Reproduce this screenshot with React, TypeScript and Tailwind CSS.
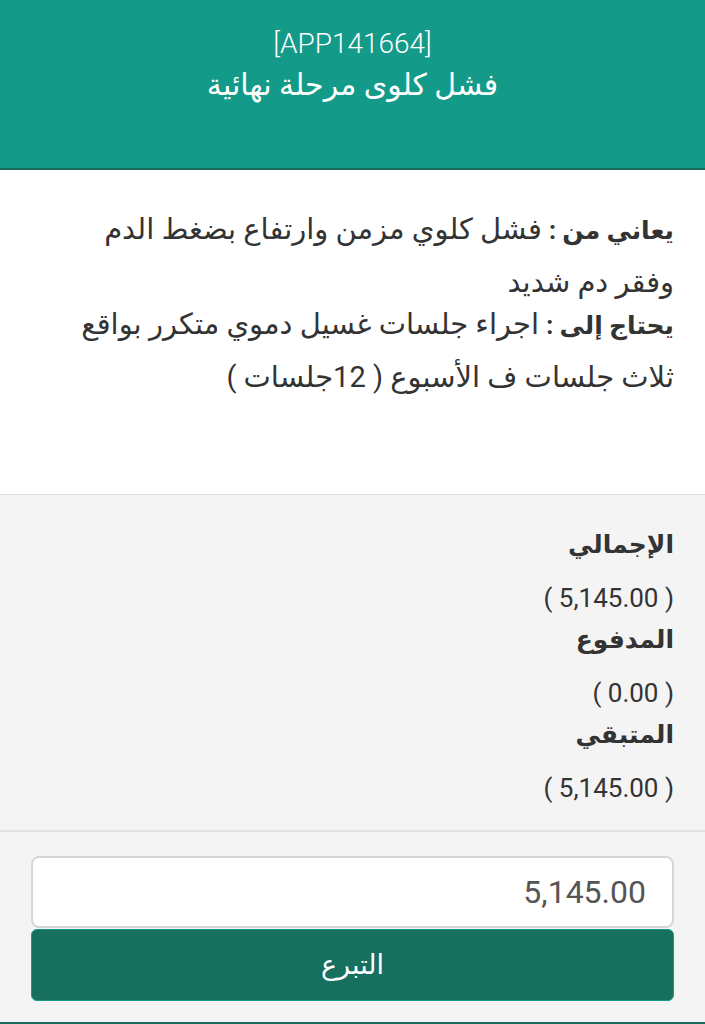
export default function App() {
  const font = { fontFamily: "Roboto, 'DejaVu Sans', sans-serif" };
  return (
    <div dir="rtl" style={font} className="w-[705px] min-h-[1024px] bg-[#f4f4f4] text-[#333]">
      <header className="h-[170px] bg-[#139a88] border-b-2 border-[#1b6b5d] text-white text-center pt-[26px]">
        <div dir="ltr" className="text-[28px] leading-[36px] font-light">[APP141664]</div>
        <div className="text-[30px] leading-[50px] mt-[-2px]">فشل كلوى مرحلة نهائية</div>
      </header>
      <section className="h-[325px] bg-white border-b border-[#dcdcdc] pr-[31px] pl-[72px] pt-[33px] text-[29px]">
        <p className="leading-[53px]">
          <b className="font-bold text-[25px] leading-[30px]">يعاني من :</b>{" "}
          <span className="leading-[30px]">فشل كلوي مزمن وارتفاع بضغط الدم وفقر دم شديد</span>
        </p>
        <p className="leading-[53px] mt-[-11px]">
          <b className="font-bold text-[25px] leading-[30px]">يحتاج إلى :</b>{" "}
          <span className="leading-[30px]">اجراء جلسات غسيل دموي متكرر بواقع ثلاث جلسات ف الأسبوع ( 12جلسات )</span>
        </p>
      </section>
      <section className="bg-[#f4f4f4] border-b-2 border-[#e2e2e2] px-[31px] pt-[29px] pb-[21px]">
        {[
          ["الإجمالي", "( 5,145.00 )"],
          ["المدفوع", "( 0.00 )"],
          ["المتبقي", "( 5,145.00 )"],
        ].map(([l, v]) => (
          <div key={l}>
            <div className="text-[25px] font-bold leading-[42px]">{l}</div>
            <div className="text-[26px] leading-[42px] mt-[11px]">{v}</div>
          </div>
        ))}
      </section>
      <section className="px-[31px] pt-[24px] pb-[21px] border-b-2 border-[#1b6b5d]">
        <div className="h-[72px] bg-white border-2 border-[#d6d6d6] rounded-[8px] flex items-center px-[26px] text-[32px] text-[#555]">
          <span dir="ltr">5,145.00</span>
        </div>
        <button className="mt-[1px] w-full h-[72px] bg-[#17705e] border border-[#1a9a84] rounded-[6px] text-white text-[27px] flex items-center justify-center">
          التبرع
        </button>
      </section>
    </div>
  );
}
